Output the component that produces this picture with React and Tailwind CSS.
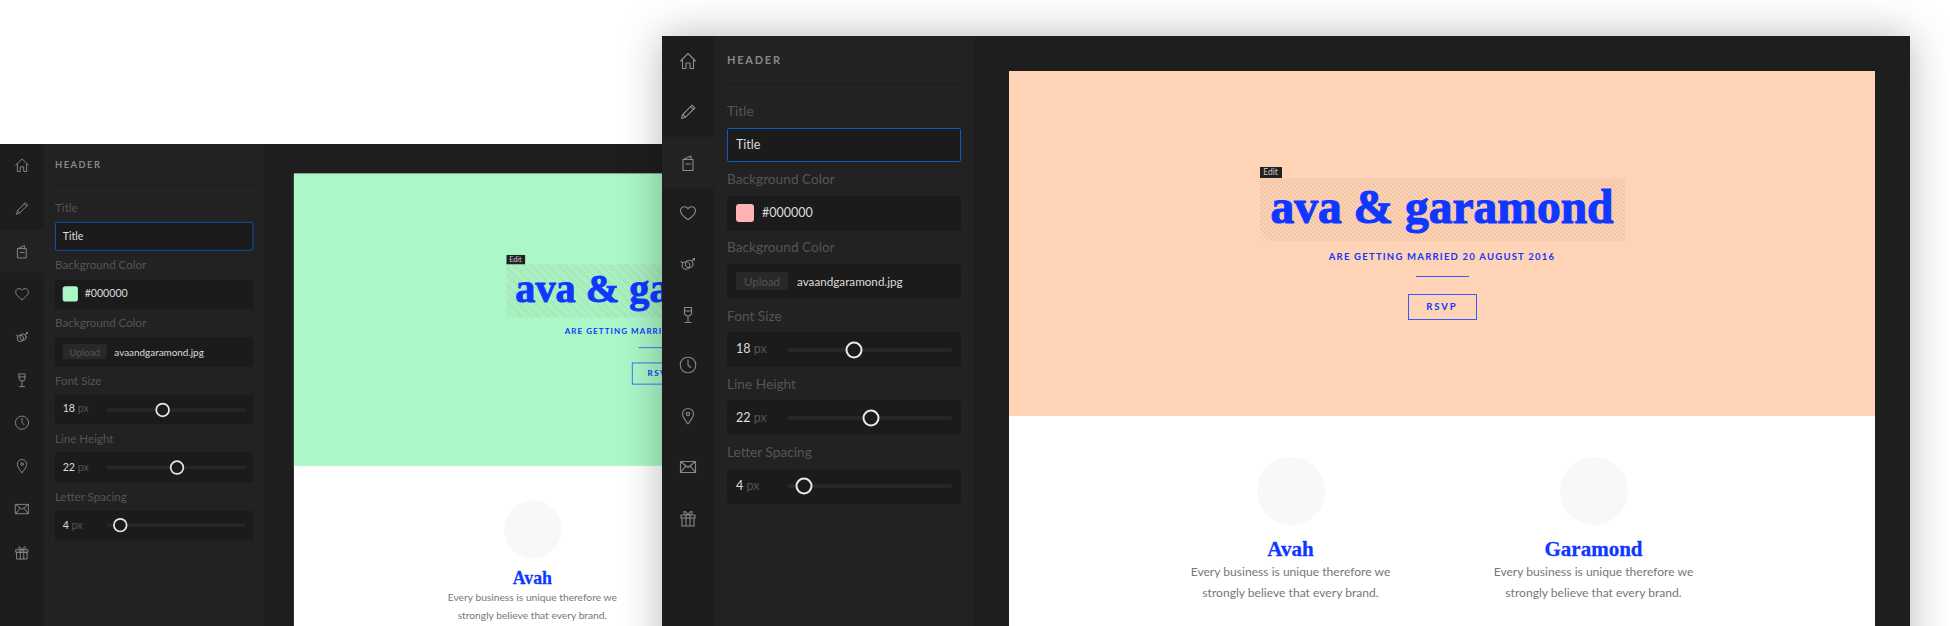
import React from 'react'

const sans = 'font-["Lato","Liberation_Sans",sans-serif]'

const icons = [
  <path key="home" d="M2.5 10 10 2.5 17.5 10M4.5 8.5V17.5H8V12H12V17.5H15.5V8.5" />,
  <path key="pencil" d="M3.5 16.5 4.8 12.5 14 3.2 16.8 6 7.5 15.2ZM12.6 4.6 15.4 7.4M4.8 12.5 7.5 15.2" />,
  <path key="menu" d="M5 6.5H15V17.5H5ZM5 6.5 13 3V6.5M8 11H12.5" />,
  <path key="heart" d="M10 16.8C4 12.5 2.5 10 2.5 7.7 2.5 5.2 4.5 3.7 6.5 3.7 8 3.7 9.3 4.5 10 5.7 10.7 4.5 12 3.7 13.5 3.7 15.5 3.7 17.5 5.2 17.5 7.7 17.5 10 16 12.5 10 16.8Z" />,
  <g key="rings"><circle cx="8" cy="11.5" r="3.8" /><circle cx="11.2" cy="10" r="3.8" /><path d="M3 7.5 4.8 9M14 7.2 16.5 4.5M15 4.5H16.5V6" /></g>,
  <path key="wine" d="M6.5 2.5H13.5V7.5A3.5 3.5 0 0 1 6.5 7.5ZM6.5 6H13.5M10 11V17.5M7 17.5H13" />,
  <g key="clock"><circle cx="10" cy="10" r="7.8" /><path d="M10 5V10L12.5 12.5" /></g>,
  <g key="pin"><path d="M10 18C6.5 13.5 4.5 10.8 4.5 8A5.5 5.5 0 0 1 15.5 8C15.5 10.8 13.5 13.5 10 18Z" /><circle cx="10" cy="8" r="1.6" /></g>,
  <path key="mail" d="M2.5 4.5H17.5V15.5H2.5ZM2.5 4.5 10 10.5 17.5 4.5M2.5 15.5 7.8 8.8M17.5 15.5 12.2 8.8" />,
  <path key="gift" d="M3 7H17V10H3ZM4 10H16V18H4ZM8 7V18M12 7V18M10 7C8 3 5.5 2.5 6 5 6.2 6.2 8 7 10 7 12 7 13.8 6.2 14 5 14.5 2.5 12 3 10 7Z" />,
]

function Rail () {
  return (
    <div className="w-[52px] shrink-0 bg-[#1d1d1d]">
      {icons.map((icon, i) => (
        <div key={i} className={'h-[50.7px] flex items-center justify-center ' + (i === 2 ? 'bg-[#222222]' : '')}>
          <svg width="20" height="20" viewBox="0 0 20 20" fill="none" stroke="#8a8a8a" strokeWidth="1.1" strokeLinejoin="round" strokeLinecap="round">{icon}</svg>
        </div>
      ))}
    </div>
  )
}

function Label ({ children }) {
  return <div className="h-[33.3px] pt-[1px] flex items-center text-[13.7px] text-[#555555]">{children}</div>
}

function Box ({ children }) {
  return <div className="h-[35px] flex items-center px-[9px] rounded-[2px] bg-[#1b1b1b]">{children}</div>
}

function Slider ({ value, left }) {
  return (
    <Box>
      <div className="w-[52px] shrink-0 text-[12.5px] text-[#dddddd]">{value} <span className="text-[#555555]">px</span></div>
      <div className="relative h-[4px] w-[164px] rounded-full bg-[#272727]">
        <div className={'absolute top-1/2 w-[17px] h-[17px] -translate-x-1/2 -translate-y-1/2 rounded-full border-2 border-[#e8e8e8] bg-[#1b1b1b] ' + left} />
      </div>
    </Box>
  )
}

function Panel ({ swatch }) {
  return (
    <div className="w-[260px] shrink-0 px-[13px] bg-[#222222]">
      <div className="h-[49px] flex items-center border-b border-[#1c1c1c] text-[11px] font-bold tracking-[0.16em] text-[#888888]">HEADER</div>
      <div className="mt-[9px]"><Label>Title</Label></div>
      <div className="mt-[1px] h-[34px] flex items-center px-[8px] rounded-[2px] border border-[#0b5cbf] bg-[#1b1b1b] text-[12.5px] text-[#dddddd]">Title</div>
      <Label>Background Color</Label>
      <Box>
        <div className={'w-[18px] h-[18px] rounded-[3px] ' + swatch} />
        <span className="ml-[8px] text-[12.5px] text-[#dddddd]">#000000</span>
      </Box>
      <Label>Background Color</Label>
      <Box>
        <div className="w-[52px] h-[18px] flex items-center justify-center rounded-[2px] bg-[#282828] text-[11.5px] text-[#555555]">Upload</div>
        <span className="ml-[9px] text-[11.7px] text-[#dddddd]">avaandgaramond.jpg</span>
      </Box>
      <Label>Font Size</Label>
      <Slider value="18" left="left-[40%]" />
      <Label>Line Height</Label>
      <Slider value="22" left="left-[50.6%]" />
      <Label>Letter Spacing</Label>
      <Slider value="4" left="left-[10%]" />
      <div className="mt-[27px] border-b border-[#262626]" />
    </div>
  )
}

function Person ({ name }) {
  return (
    <div className="w-[303px] flex flex-col items-center">
      <div className="w-[68px] h-[68px] rounded-full bg-[#f8f8f8]" />
      <div className="mt-[13px] h-[23px] flex items-center font-['Liberation_Serif',serif] font-bold text-[21px] text-[#0f37ff] [-webkit-text-stroke:0.3px_#0f37ff]">{name}</div>
      <p className="text-center text-[12.1px] leading-[21px] text-[#777777]">Every business is unique therefore we<br />strongly believe that every brand.</p>
    </div>
  )
}

function Hero ({ bg }) {
  return (
    <div className={'h-[345px] pt-[107px] flex flex-col items-center ' + bg}>
      <div className="relative w-[365px] h-[63px] bg-[repeating-linear-gradient(45deg,rgba(130,90,60,0.12)_0,rgba(130,90,60,0.12)_1.41px,transparent_1.41px,transparent_2.83px)]">
        <div className="absolute left-0 -top-[11px] w-[22px] h-[11px] flex items-center justify-center bg-[#222222] text-[8.5px] text-[#cccccc]">Edit</div>
        <div className="text-center whitespace-nowrap font-['Liberation_Serif',serif] font-bold text-[47.5px] leading-[59px] text-[#0f37ff] [-webkit-text-stroke:1.1px_#0f37ff]">ava &amp; garamond</div>
      </div>
      <div className="mt-[10px] text-[9.5px] leading-[12px] font-bold tracking-[0.13em] whitespace-nowrap text-[#0f37ff]">ARE GETTING MARRIED 20 AUGUST 2016</div>
      <div className="mt-[13px] w-[53px] h-px bg-[#3a57ff]" />
      <div className="mt-[17px] w-[69px] h-[26px] flex items-center justify-center border border-[#3a57ff] text-[9.5px] font-bold tracking-[0.2em] text-[#0f37ff]">RSVP</div>
    </div>
  )
}

function AppWindow ({ className, heroBg, swatch }) {
  return (
    <div className={'absolute w-[1248px] h-[720px] flex bg-[#1e1e1e] ' + sans + ' ' + className}>
      <Rail />
      <Panel swatch={swatch} />
      <div className="flex-1 pt-[35px] pl-[35px] pr-[35px]">
        <div className="h-full bg-white">
          <Hero bg={heroBg} />
          <div className="pt-[41px] flex justify-center">
            <Person name="Avah" />
            <Person name="Garamond" />
          </div>
        </div>
      </div>
    </div>
  )
}

export default function App () {
  return (
    <div className="relative w-[1950px] h-[626px] overflow-hidden bg-white">
      <AppWindow className="left-0 top-[144px] origin-top-left scale-[0.847]" heroBg="bg-[#abf7c7]" swatch="bg-[#abf7c7]" />
      <AppWindow className="left-[662px] top-[36px] shadow-[0_0_40px_rgba(0,0,0,0.28)]" heroBg="bg-[#ffd3b5]" swatch="bg-[#ffb3b3]" />
    </div>
  )
}
